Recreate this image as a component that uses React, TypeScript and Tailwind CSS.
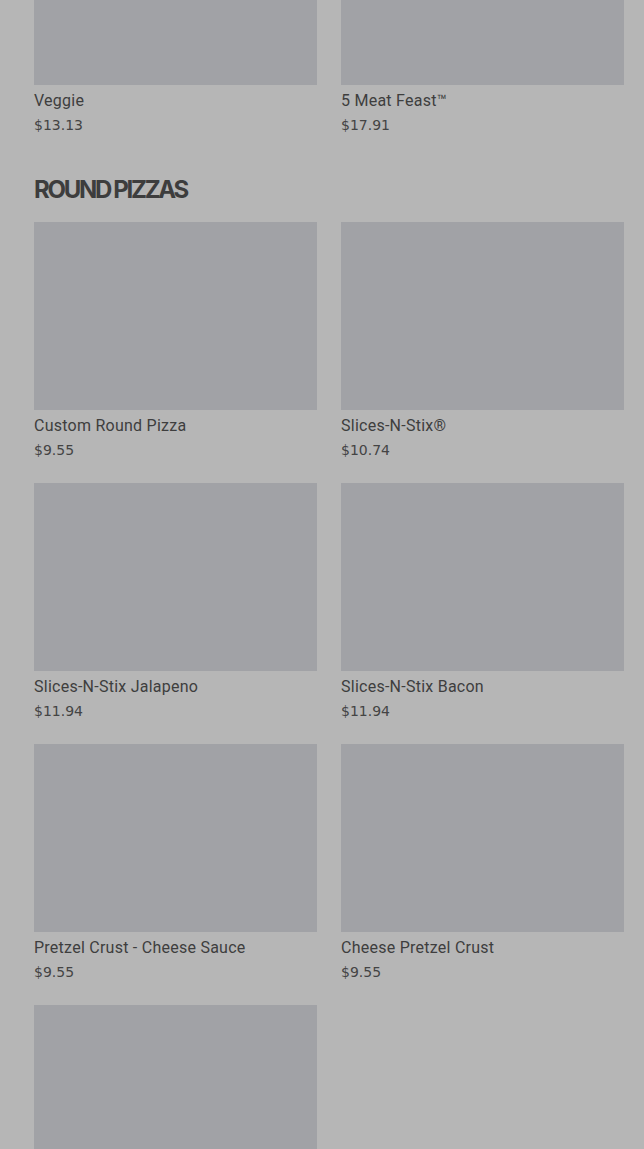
type Item = { name: string; price: string };

const topRow: Item[] = [
  { name: "Veggie", price: "$13.13" },
  { name: "5 Meat Feast™", price: "$17.91" },
];

const roundPizzas: Item[] = [
  { name: "Custom Round Pizza", price: "$9.55" },
  { name: "Slices-N-Stix®", price: "$10.74" },
  { name: "Slices-N-Stix Jalapeno", price: "$11.94" },
  { name: "Slices-N-Stix Bacon", price: "$11.94" },
  { name: "Pretzel Crust - Cheese Sauce", price: "$9.55" },
  { name: "Cheese Pretzel Crust", price: "$9.55" },
  { name: "Pepperoni Pretzel Crust", price: "$10.74" },
];

const ProductCard = ({ name, price }: Item) => {
  return (
    <div className="flex flex-col">
      <div className="h-[188px] w-full bg-[#a1a2a6]" />
      <p className="mt-[4px] text-[16px] leading-6 tracking-[0.25px] text-[#3e3e3e] font-['Roboto',sans-serif]">
        {name}
      </p>
      <p className="mt-[2px] text-[14px] leading-5 text-[#444] font-['DejaVu_Sans',sans-serif]">
        {price}
      </p>
    </div>
  );
};

export default function App() {
  return (
    <div className="h-[1149px] w-full overflow-hidden bg-[#b6b6b6]">
      <div className="w-[590px] ml-[34px] -mt-[103px]">
        <div className="grid grid-cols-2 gap-x-6">
          {topRow.map((it) => (
            <ProductCard key={it.name} {...it} />
          ))}
        </div>

        <h2 className="mt-[39px] h-8 text-[24px] leading-8 font-bold tracking-[-2.3px] text-[#3d3d3d] font-['Inter',sans-serif]">
          ROUND PIZZAS
        </h2>

        <div className="mt-4 grid grid-cols-2 gap-x-6 gap-y-[23px]">
          {roundPizzas.map((it) => (
            <ProductCard key={it.name} {...it} />
          ))}
        </div>
      </div>
    </div>
  );
}
